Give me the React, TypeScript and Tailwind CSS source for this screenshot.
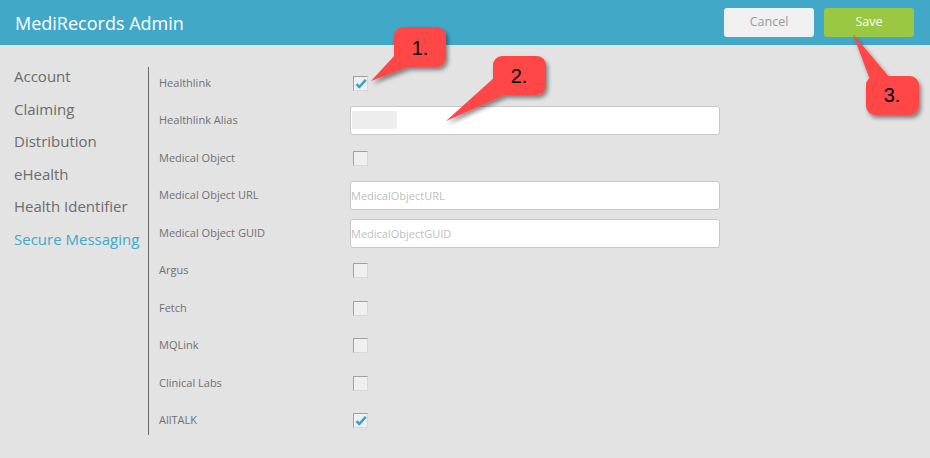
import { useState } from 'react'

const sections = ['Account', 'Claiming', 'Distribution', 'eHealth', 'Health Identifier', 'Secure Messaging']

type Row =
  | { label: string; kind: 'check'; checked: boolean }
  | { label: string; kind: 'text'; placeholder: string; masked?: boolean }

const rows: Row[] = [
  { label: 'Healthlink', kind: 'check', checked: true },
  { label: 'Healthlink Alias', kind: 'text', placeholder: '', masked: true },
  { label: 'Medical Object', kind: 'check', checked: false },
  { label: 'Medical Object URL', kind: 'text', placeholder: 'MedicalObjectURL' },
  { label: 'Medical Object GUID', kind: 'text', placeholder: 'MedicalObjectGUID' },
  { label: 'Argus', kind: 'check', checked: false },
  { label: 'Fetch', kind: 'check', checked: false },
  { label: 'MQLink', kind: 'check', checked: false },
  { label: 'Clinical Labs', kind: 'check', checked: false },
  { label: 'AllTALK', kind: 'check', checked: true },
]

function Checkbox({ checked }: { checked: boolean }) {
  return (
    <div className="ml-[3px] w-[15px] h-[15px] bg-[#efefef] border border-t-[#a0a0a0] border-l-[#a0a0a0] border-r-[#d8d8d8] border-b-[#d8d8d8] flex items-center justify-center">
      {checked && (
        <svg width="12" height="11" viewBox="0 0 12 11">
          <path d="M1.5 6.2 L4.3 9 L10.8 1.8" fill="none" stroke="#3aa2cb" strokeWidth="2.6" strokeLinejoin="round" />
        </svg>
      )}
    </div>
  )
}

function Callouts() {
  const fill = '#ff4747'
  return (
    <svg className="absolute inset-0 pointer-events-none" width="930" height="458">
      <defs>
        <filter id="sh" x="-30%" y="-30%" width="160%" height="160%">
          <feDropShadow dx="2" dy="3" stdDeviation="2" floodColor="#000" floodOpacity="0.45" />
        </filter>
      </defs>
      <g filter="url(#sh)" fill={fill}>
        <rect x="394" y="27" width="52" height="40" rx="9" />
        <polygon points="396,54 371,81 411,66" />
        <rect x="493" y="56" width="53" height="39" rx="9" />
        <polygon points="495,77 446,121 507,94" />
        <rect x="866" y="76" width="53" height="39" rx="9" />
        <polygon points="853,34 870,80 890,78" />
      </g>
      <g fill="#000" fontFamily="'Liberation Sans', Arial, sans-serif" fontSize="20" textAnchor="middle">
        <text x="420" y="55">1.</text>
        <text x="519" y="83">2.</text>
        <text x="892" y="102">3.</text>
      </g>
    </svg>
  )
}

export default function App() {
  const [active] = useState('Secure Messaging')

  return (
    <div className="relative w-[930px] h-[458px] bg-[#e3e3e3] overflow-hidden" style={{ fontFamily: "'Open Sans', 'Noto Sans', sans-serif" }}>
      {/* Header */}
      <div className="h-[45px] bg-[#41a8c8] flex items-center justify-between pl-[15px] pr-[16px]">
        <h1 className="text-white text-[18px] leading-none">MediRecords Admin</h1>
        <div className="flex gap-[10px]">
          <button className="w-[90px] h-[29px] rounded-[3px] bg-[#f0f0f0] text-[#9a9a9a] text-[12.5px]">Cancel</button>
          <button className="w-[90px] h-[29px] rounded-[3px] bg-[#9bc843] text-white text-[12.5px]">Save</button>
        </div>
      </div>

      {/* Body */}
      <div className="flex pt-[15px]">
        <nav className="w-[148px] pl-[14px]">
          {sections.map((s) => (
            <div
              key={s}
              className={`h-[32.6px] leading-[32.6px] text-[15px] whitespace-nowrap ${
                s === active ? 'text-[#41a8c8]' : 'text-[#6b6b6b]'
              }`}
            >
              {s}
            </div>
          ))}
        </nav>

        <div className="w-px bg-[#6a6a6a] mt-[7px] mb-[4px]" />

        <div className="pl-[10px] pt-[4.25px]">
          {rows.map((r) => (
            <div key={r.label} className="h-[37.5px] flex items-center">
              <div className="w-[191px] text-[11px] text-[#707070]">{r.label}</div>
              {r.kind === 'check' ? (
                <Checkbox checked={r.checked} />
              ) : (
                <div className="relative w-[370px] h-[29px] bg-white border border-[#c8c8c8] rounded-[3px] flex items-center">
                  {r.masked && <div className="absolute left-[1px] top-[4px] w-[45px] h-[18px] bg-[#ededed]" />}
                  <input
                    className="w-full h-full bg-transparent outline-none text-[11px] placeholder:text-[#c0c0c0]"
                    placeholder={r.placeholder}
                    readOnly
                  />
                </div>
              )}
            </div>
          ))}
        </div>
      </div>

      <Callouts />
    </div>
  )
}
